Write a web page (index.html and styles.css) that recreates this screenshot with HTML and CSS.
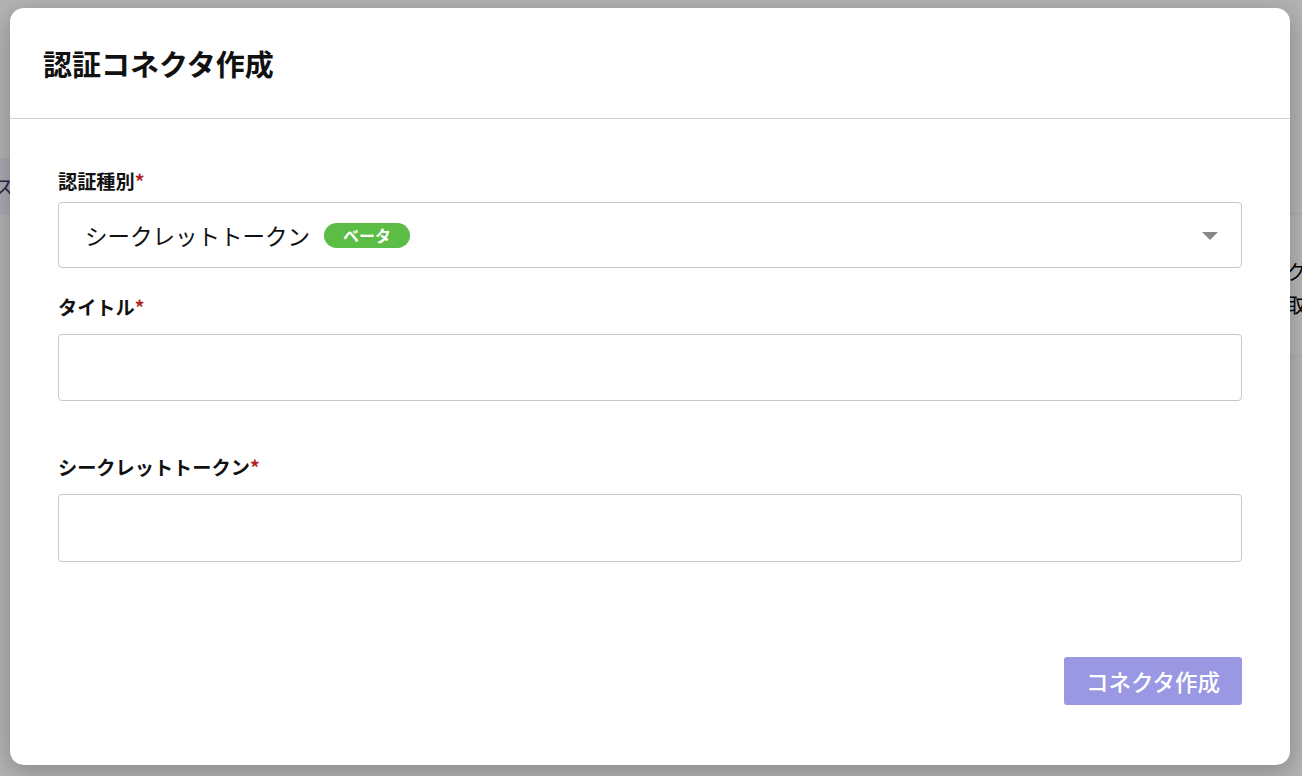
FILE: index.html
```html
<!DOCTYPE html>
<html lang="ja">
<head>
    <meta charset="UTF-8">
    <meta name="viewport" content="width=device-width, initial-scale=1.0">
    <title>認証コネクタ作成</title>
    <link rel="stylesheet" href="styles.css">
</head>
<body>
    <!-- ページ本体 (モーダルの下に隠れている部分) -->
    <div class="page">
        <div class="page-tab">ス</div>
        <div class="page-card">ク<br>取</div>
    </div>
    <div class="backdrop"></div>

    <div class="modal">
        <div class="modal-header">
            <h1>認証コネクタ作成</h1>
        </div>
        <form class="modal-body" id="connectorForm">
            <div class="field field-type">
                <label>認証種別<span class="req">*</span></label>
                <div class="select">
                    <span class="select-value">シークレットトークン</span>
                    <span class="badge">ベータ</span>
                    <span class="select-arrow"></span>
                </div>
            </div>
            <div class="field field-title">
                <label for="title">タイトル<span class="req">*</span></label>
                <input type="text" id="title">
            </div>
            <div class="field field-secret">
                <label for="secret">シークレットトークン<span class="req">*</span></label>
                <input type="text" id="secret">
            </div>
            <div class="actions">
                <button type="submit" disabled>コネクタ作成</button>
            </div>
        </form>
    </div>
</body>
</html>
```

FILE: styles.css
```css
body {
    margin: 0;
    width: 1302px;
    height: 776px;
    overflow: hidden;
    font-family: "Noto Sans CJK JP", "Noto Sans", sans-serif;
    background-color: #fff;
    position: relative;
}
.page {
    position: absolute;
    inset: 0;
    background-color: #fcfcfc;
    overflow: hidden;
}
.page-tab {
    position: absolute;
    left: -6px;
    top: 158px;
    width: 300px;
    height: 57px;
    background-color: #eeeefa;
    color: #3a3a66;
    font-size: 20px;
    line-height: 57px;
}
.page-card {
    position: absolute;
    left: 1245px;
    top: 215px;
    width: 200px;
    height: 140px;
    background-color: #fff;
    box-shadow: 0 0 4px rgba(0, 0, 0, 0.1);
    color: #000;
    font-size: 20px;
    line-height: 33px;
    padding-top: 40px;
    padding-left: 41px;
    box-sizing: border-box;
}
.backdrop {
    position: absolute;
    inset: 0;
    background-color: rgba(0, 0, 0, 0.29);
}
.modal {
    position: absolute;
    left: 10px;
    top: 8px;
    width: 1280px;
    height: 757px;
    background-color: #fff;
    border-radius: 14px;
    box-shadow: 0 6px 24px rgba(0, 0, 0, 0.25);
    display: flex;
    flex-direction: column;
}
.modal-header {
    height: 110px;
    border-bottom: 1px solid #d0d0d0;
    display: flex;
    align-items: center;
    padding-left: 33px;
}
.modal-header h1 {
    margin: 0;
    font-size: 29px;
    font-weight: 700;
    color: #111;
}
.modal-body {
    flex: 1;
    padding: 50px 48px 60px;
    display: flex;
    flex-direction: column;
}
.field label {
    display: block;
    font-size: 19.2px;
    line-height: 24px;
    font-weight: 700;
    color: #111;
    margin-bottom: 9px;
}
.req {
    color: #b22222;
}
.field-title {
    margin-top: 27px;
}
.field-title label, .field-secret label {
    margin-bottom: 15px;
}
.field-secret {
    margin-top: 54px;
}
.select, .field input {
    box-sizing: border-box;
    width: 100%;
    border: 1px solid #c8c8c8;
    border-radius: 4px;
    background-color: #fff;
}
.select {
    height: 66px;
    display: flex;
    align-items: center;
    padding: 0 23px 0 26px;
}
.select-value {
    font-size: 22.5px;
    color: #111;
}
.badge {
    margin-left: 14px;
    background-color: #5bbd45;
    color: #fff;
    font-size: 16px;
    font-weight: 700;
    height: 25px;
    line-height: 25px;
    padding: 0 19px;
    border-radius: 13px;
}
.select-arrow {
    margin-left: auto;
    width: 0;
    height: 0;
    border-left: 8px solid transparent;
    border-right: 8px solid transparent;
    border-top: 8px solid #888;
    margin-top: 2px;
}
.field input {
    display: block;
    height: 67px;
    font-size: 20px;
    padding: 0 20px;
    font-family: inherit;
}
.field-secret input {
    height: 68px;
}
.actions {
    margin-top: auto;
    display: flex;
    justify-content: flex-end;
}
.actions button {
    width: 178px;
    height: 48px;
    background-color: #9a98e3;
    color: #fff;
    border: none;
    border-radius: 3px;
    font-family: inherit;
    font-size: 22.5px;
    font-weight: 500;
}
```
